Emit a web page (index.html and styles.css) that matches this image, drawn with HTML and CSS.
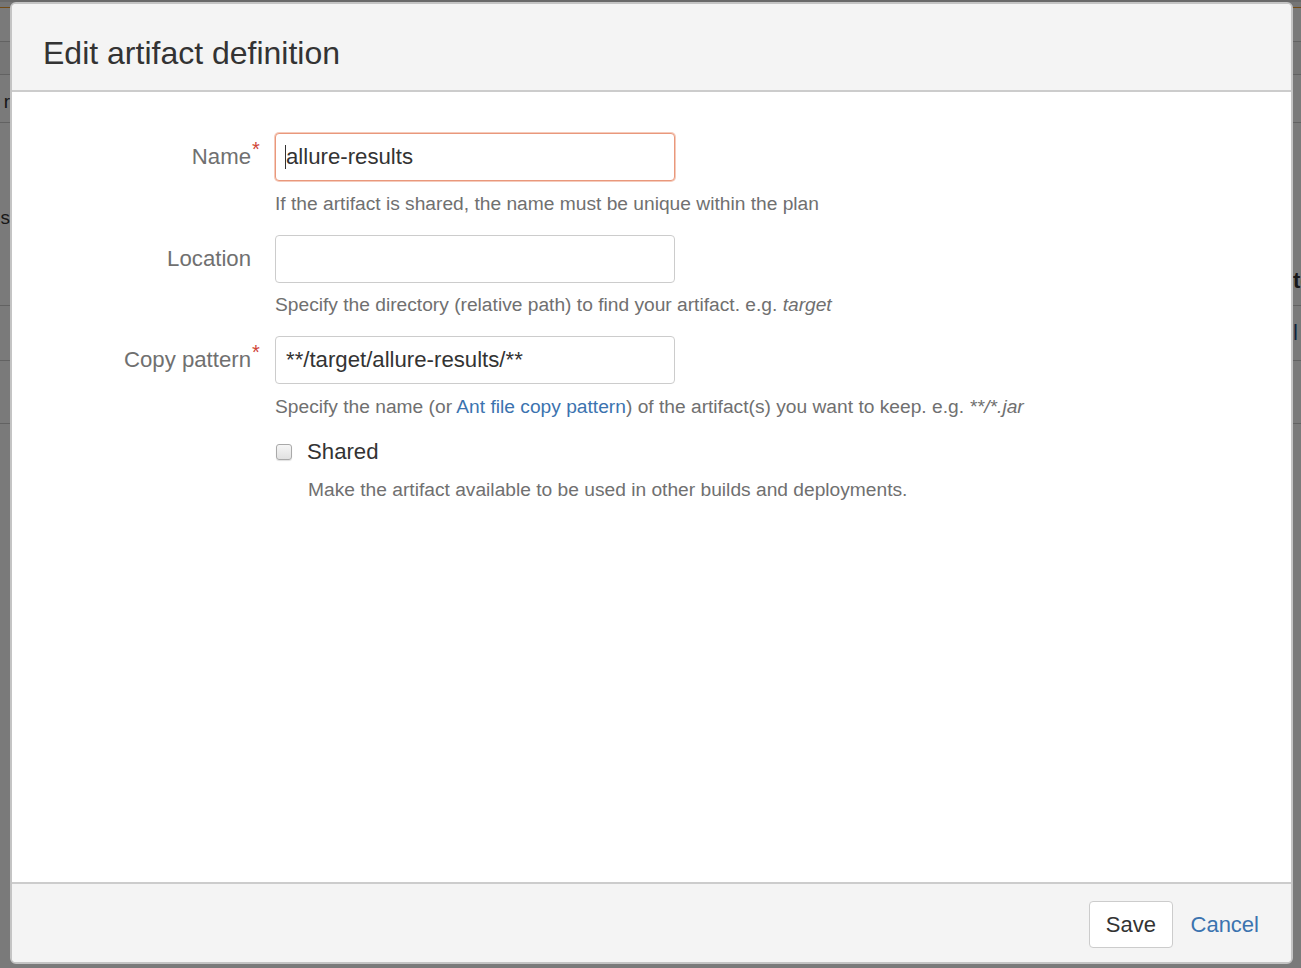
FILE: index.html
```html
<!DOCTYPE html>
<html lang="en">
<head>
<meta charset="utf-8">
<title>Edit artifact definition</title>
<link rel="stylesheet" href="styles.css">
</head>
<body>
<div class="page">
  <div class="p-top"></div>
  <div class="p-gap"></div>
  <div class="p-accent"></div>
  <div class="prow h33"></div>
  <div class="prow h32 shade"></div>
  <div class="prow h47"><span class="pl t1">r</span><span></span><span class="pr"></span></div>
  <div class="prow h182"><span class="pl t2">s</span><span></span><span class="pr t3">to</span></div>
  <div class="prow h54"><span class="pl"></span><span></span><span class="pr t4">l</span></div>
  <div class="prow h62"></div>
</div>
<div class="backdrop"></div>

<div class="modal" role="dialog">
  <div class="modal-header">
    <h2 class="modal-title">Edit artifact definition</h2>
  </div>
  <div class="modal-body">
    <form class="form">
      <div class="field">
        <label class="field-label"><span class="label-text">Name<span class="req">*</span></span></label>
        <div class="input-wrap">
          <input class="text focused" type="text" value="allure-results">
          <span class="caret"></span>
        </div>
        <div class="help">If the artifact is shared, the name must be unique within the plan</div>
      </div>
      <div class="field">
        <label class="field-label"><span class="label-text">Location</span></label>
        <div class="input-wrap">
          <input class="text" type="text" value="">
        </div>
        <div class="help">Specify the directory (relative path) to find your artifact. e.g. <em>target</em></div>
      </div>
      <div class="field">
        <label class="field-label"><span class="label-text">Copy pattern<span class="req">*</span></span></label>
        <div class="input-wrap">
          <input class="text" type="text" value="**/target/allure-results/**">
        </div>
        <div class="help">Specify the name (or <a class="link" href="#">Ant file copy pattern</a>) of the artifact(s) you want to keep. e.g. <em>**/*.jar</em></div>
      </div>
      <div class="check-field">
        <label class="check-row"><input class="checkbox" type="checkbox"><span class="check-label">Shared</span></label>
        <div class="check-help">Make the artifact available to be used in other builds and deployments.</div>
      </div>
    </form>
  </div>
  <div class="modal-footer">
    <button class="btn" type="button">Save</button>
    <a class="cancel" href="#">Cancel</a>
  </div>
</div>
</body>
</html>
```

FILE: styles.css
```css
* { box-sizing: border-box; }

html, body {
  margin: 0;
  padding: 0;
  width: 1301px;
  height: 968px;
  overflow: hidden;
  background: #ffffff;
  font-family: "Liberation Sans", Arial, sans-serif;
}

/* underlying page, only slivers visible */
.page {
  display: flex;
  flex-direction: column;
  width: 1301px;
}
.p-top { height: 2px; background: #dcdcdc; }
.p-gap { height: 5px; background: #f5f5f5; }
.p-accent { height: 1px; background: #f0a030; }
.prow {
  display: grid;
  grid-template-columns: 10px 1fr 8px;
  border-bottom: 1px solid #cccccc;
  font-size: 19px;
  color: #333;
}
.shade { background: #f7f7f7; }
.h33 { height: 34px; }
.h32 { height: 33px; }
.h47 { height: 48px; }
.h182 { height: 183px; }
.h54 { height: 55px; }
.h62 { height: 63px; }
.pl { text-align: right; overflow: visible; white-space: nowrap; direction: rtl; }
.pr { white-space: nowrap; overflow: hidden; }
.t1 { padding-top: 16px; }
.t2 { padding-top: 84px; }
.t3 { padding-top: 145px; font-weight: bold; font-size: 22px; }
.t4 { padding-top: 14px; color: #2b4a80; font-size: 22px; }

.backdrop {
  position: absolute;
  inset: 0;
  background: rgba(0, 0, 0, 0.52);
}

/* modal */
.modal {
  position: absolute;
  left: 10px;
  top: 2px;
  width: 1283px;
  height: 962px;
  display: flex;
  flex-direction: column;
  border: 2px solid #c4c4c4;
  border-radius: 6px;
  background: #ffffff;
  overflow: hidden;
}

.modal-header {
  background: #f4f4f4;
  border-bottom: 2px solid #cccccc;
  padding: 29px 30px 17px 31px;
}
.modal-title {
  margin: 0;
  font-size: 32px;
  line-height: 40px;
  font-weight: normal;
  color: #333333;
}

.modal-body {
  flex: 1;
  padding: 41px 30px 0 30px;
  background: #ffffff;
}

.form { display: flex; flex-direction: column; }

.field {
  display: grid;
  grid-template-columns: 209px 400px;
  column-gap: 24px;
  margin-bottom: 19px;
}
.field-label {
  grid-column: 1;
  display: flex;
  align-items: center;
  justify-content: flex-end;
  height: 48px;
  font-size: 22.2px;
  color: #707070;
}
.label-text {
  position: relative;
  line-height: 26px;
}
.req {
  position: absolute;
  left: 100%;
  top: -5px;
  margin-left: 1px;
  font-size: 20px;
  line-height: 20px;
  color: #d04437;
}

.input-wrap {
  grid-column: 2;
  position: relative;
  height: 48px;
}
.text {
  display: block;
  width: 400px;
  height: 48px;
  margin: 0;
  padding: 0 10px;
  border: 1px solid #cccccc;
  border-radius: 4px;
  font-family: "Liberation Sans", Arial, sans-serif;
  font-size: 22.2px;
  color: #333333;
  background: #ffffff;
  outline: none;
}
.text.focused {
  border-color: #e9987c;
  box-shadow: 0 0 0 1px rgba(236, 160, 132, 0.55);
}
.caret {
  position: absolute;
  left: 10px;
  top: 12px;
  width: 1px;
  height: 24px;
  background: #333333;
}

.help {
  grid-column: 2 / span 1;
  margin-top: 10.5px;
  font-size: 19.2px;
  line-height: 24px;
  color: #707070;
  white-space: nowrap;
}
.help em { font-style: italic; }
.link { color: #3b73af; text-decoration: none; }

.check-field {
  margin-left: 233px;
  margin-top: -1px;
  display: flex;
  flex-direction: column;
}
.check-row {
  display: flex;
  align-items: center;
  height: 30px;
}
.checkbox {
  appearance: none;
  -webkit-appearance: none;
  width: 16px;
  height: 16px;
  margin: 0 15px 0 1px;
  border: 1px solid #a9a9a9;
  border-radius: 3px;
  background: linear-gradient(#f6f6f6, #e1e1e1);
  box-shadow: 0 1px 1px rgba(0, 0, 0, 0.12);
}
.check-label {
  font-size: 22.2px;
  line-height: 30px;
  color: #333333;
}
.check-help {
  margin-top: 11px;
  margin-left: 33px;
  font-size: 19.2px;
  line-height: 24px;
  color: #707070;
}

.modal-footer {
  display: flex;
  align-items: center;
  justify-content: flex-end;
  background: #f4f4f4;
  border-top: 2px solid #cccccc;
  padding: 17px 32px 14px 30px;
}
.btn {
  height: 47px;
  padding: 0 15.5px;
  border: 1px solid #cccccc;
  border-radius: 4px;
  background: #ffffff;
  font-family: "Liberation Sans", Arial, sans-serif;
  font-size: 22px;
  color: #333333;
}
.cancel {
  margin-left: 18px;
  font-size: 22px;
  color: #3b73af;
  text-decoration: none;
}
```
